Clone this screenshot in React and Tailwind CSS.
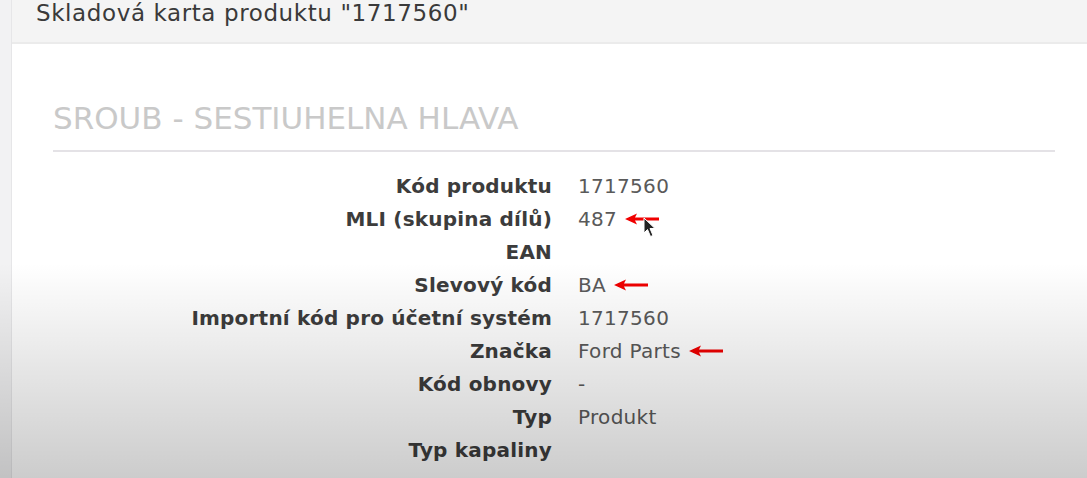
import React from "react";

const rows = [
  { label: "Kód produktu", value: "1717560" },
  { label: "MLI (skupina dílů)", value: "487", arrow: true, cursor: true },
  { label: "EAN", value: "" },
  { label: "Slevový kód", value: "BA", arrow: true },
  { label: "Importní kód pro účetní systém", value: "1717560" },
  { label: "Značka", value: "Ford Parts", arrow: true },
  { label: "Kód obnovy", value: "-" },
  { label: "Typ", value: "Produkt" },
  { label: "Typ kapaliny", value: "" },
];

const RedArrow = ({ cursor }) => (
  <span className="relative ml-[8px] shrink-0 flex">
    <svg width="34" height="12" viewBox="0 0 34 12">
      <path d="M0 6 L12 0.5 L10 4.6 L34 4.6 L34 7.4 L10 7.4 L12 11.5 Z" fill="#f00000" />
    </svg>
    {cursor && (
      <svg width="14" height="22" viewBox="0 0 14 22" className="absolute left-[18px] top-[4px]">
        <path d="M1 1 L1 16 L4.5 12.5 L7.5 19.5 L10 18.5 L7 11.5 L12 11.5 Z" fill="#222" stroke="#fff" strokeWidth="1" />
      </svg>
    )}
  </span>
);

export default function App() {
  return (
    <div
      className="relative w-[1087px] h-[478px] overflow-hidden flex bg-[#f2f2f3]"
      style={{ fontFamily: "'DejaVu Sans', 'Noto Sans', sans-serif" }}
    >
      <div className="w-[12px] shrink-0 border-r border-[#e6e6e8]" />
      <div className="flex-1 flex flex-col">
        <div className="h-[44px] shrink-0 bg-[#f4f4f4] border-b-2 border-[#ebebeb] flex items-start pl-[24px]">
          <h1 className="text-[23px] leading-[26px] tracking-[0.6px] text-[#3a3a3a]">
            Skladová karta produktu "1717560"
          </h1>
        </div>
        <div className="flex-1 bg-white pl-[41px] pr-[32px] pt-[52px]">
          <h2 className="text-[31px] leading-[44px] text-[#c9c9c9] pb-[10px] border-b-2 border-[#e4e2e6]">
            SROUB - SESTIUHELNA HLAVA
          </h2>
          <div className="mt-[17px] flex flex-col">
            {rows.map((r) => (
              <div key={r.label} className="flex items-center h-[33px]">
                <div className="w-[499px] text-right text-[20px] tracking-[0.2px] font-bold text-[#3c3c3c]">
                  {r.label}
                </div>
                <div className="pl-[26px] flex items-center text-[20px] tracking-[0.3px] text-[#5a5a5a]">
                  <span>{r.value}</span>
                  {r.arrow && <RedArrow cursor={r.cursor} />}
                </div>
              </div>
            ))}
          </div>
        </div>
      </div>
      <div className="pointer-events-none absolute inset-0 bg-gradient-to-b from-transparent from-[55%] to-black/20" />
    </div>
  );
}
